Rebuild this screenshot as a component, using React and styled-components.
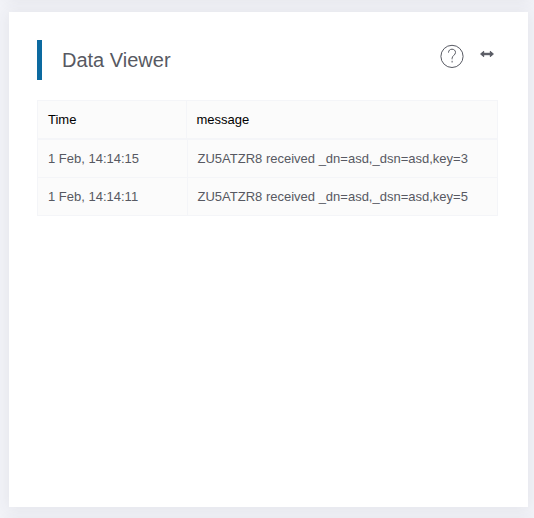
import React from "react";
import styled, { createGlobalStyle } from "styled-components";

const GlobalStyle = createGlobalStyle`
  * { box-sizing: border-box; }
  body {
    margin: 0;
    background: #f2f3f8;
    font-family: "Liberation Sans", Arial, sans-serif;
    font-size: 13px;
    color: #575962;
    overflow: hidden;
  }
`;

const Page = styled.div`
  height: 518px;
  padding: 12px 6px 11px 9px;
  overflow: hidden;
`;

/* The offset shadows darken the gutters above and below the card. */
const Card = styled.section`
  height: 495px;
  padding: 28px 30px 0 28px;
  background: #fff;
  box-shadow:
    0 1px 15px 1px rgba(69, 65, 78, 0.08),
    0 -508px 15px 1px rgba(69, 65, 78, 0.08),
    0 510px 15px 1px rgba(69, 65, 78, 0.08);
`;

const Header = styled.header`
  display: flex;
  height: 40px;
  margin-bottom: 20px;
  border-left: 5px solid #0c6aa0;
  padding-left: 20px;
`;

const Title = styled.h3`
  flex: 1;
  margin: 0;
  font-size: 20px;
  font-weight: 400;
  line-height: 40px;
`;

const Actions = styled.div`
  display: flex;
  align-items: flex-start;
  gap: 16px;
  padding: 4px 4px 0 0;
`;

const Icon = styled.svg`
  display: block;
  width: ${(p) => p.$w}px;
  height: ${(p) => p.$h}px;
  margin-top: ${(p) => p.$top || 0}px;
`;

const Table = styled.div`
  border: 1px solid #f4f5f8;
  background: #fbfbfb;
`;

const Row = styled.div`
  display: grid;
  grid-template-columns: ${(p) => (p.$head ? "148px" : "149px")} 1fr;
  height: ${(p) => (p.$head ? 39 : p.$last ? 37 : 38)}px;
  line-height: ${(p) => (p.$head ? 37 : 38)}px;
  color: ${(p) => (p.$head ? "#000" : "inherit")};
  border-bottom: ${(p) => (p.$head ? 2 : p.$last ? 0 : 1)}px solid #f4f5f8;
`;

const Cell = styled.div`
  padding-left: 10px;
  white-space: nowrap;
  & + & {
    border-left: 1px solid #f4f5f8;
    padding-left: ${(p) => (p.$head ? 10 : 9.5)}px;
  }
`;

const rows = [
  ["1 Feb, 14:14:15", "ZU5ATZR8 received _dn=asd,_dsn=asd,key=3"],
  ["1 Feb, 14:14:11", "ZU5ATZR8 received _dn=asd,_dsn=asd,key=5"],
];

const HelpIcon = () => (
  <Icon $w={24} $h={24} viewBox="0 0 24 24" fill="none" stroke="#575962" strokeWidth="1">
    <circle cx="12" cy="12.4" r="11.1" />
    <path d="M8.5 8.6C8.5 6.4 10 5.2 12 5.2s3.5 1.3 3.5 3.2c0 2.7-3.4 3.2-3.4 5.9v1M12.1 16.8v1.7" />
  </Icon>
);

const ResizeIcon = () => (
  <Icon
    $w={14}
    $h={8}
    $top={6}
    viewBox="0 0 14 8"
    fill="#575962"
    stroke="#575962"
    strokeWidth="1"
    strokeLinejoin="round"
  >
    <path d="M.6 4 3.7 1.3V3.3h6.6V1.3L13.4 4l-3.1 2.7V4.7H3.7v2Z" />
  </Icon>
);

export default function App() {
  return (
    <Page>
      <GlobalStyle />
      <Card>
        <Header>
          <Title>Data Viewer</Title>
          <Actions>
            <HelpIcon />
            <ResizeIcon />
          </Actions>
        </Header>
        <Table>
          <Row $head>
            <Cell $head>Time</Cell>
            <Cell $head>message</Cell>
          </Row>
          {rows.map(([time, message], i) => (
            <Row key={time} $last={i === rows.length - 1}>
              <Cell>{time}</Cell>
              <Cell>{message}</Cell>
            </Row>
          ))}
        </Table>
      </Card>
    </Page>
  );
}
